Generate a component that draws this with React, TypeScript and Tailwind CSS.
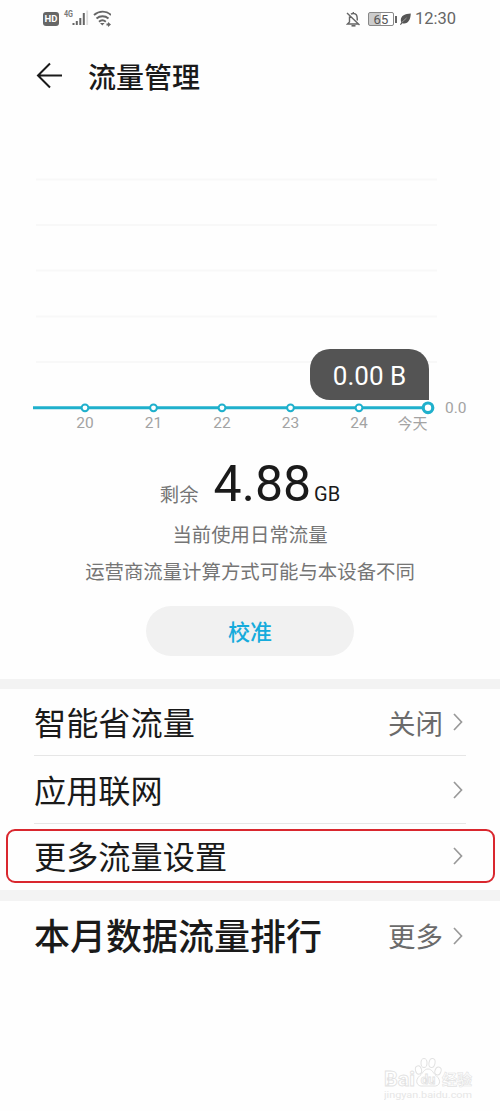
const GRID_LINES = [179.5, 225, 270.5, 316.5, 362];

const DAYS = [
  { label: "20", x: 85 },
  { label: "21", x: 153.5 },
  { label: "22", x: 222 },
  { label: "23", x: 290.5 },
  { label: "24", x: 359 },
];

function StatusBar() {
  return (
    <div className="flex h-[38px] items-center justify-between pr-11 pl-[43px] text-[#666]">
      <div className="flex items-center">
        <span className="flex h-[14px] w-4 items-center justify-center rounded-[3px] bg-[#666] text-[9.5px] font-bold text-white">
          HD
        </span>
        <svg className="ml-1 h-5 w-12" viewBox="0 0 48 20" fill="none">
          <text x="1" y="8" fontSize="9" fontWeight="700" fill="#777" textLength="9" lengthAdjust="spacingAndGlyphs">
            4G
          </text>
          <path d="M10.500 16v-2M13.800 16v-4M17.300 16V9M20.800 16V4" stroke="#666" strokeWidth="2" />
          <path d="M24.200 16V1.500" stroke="#ddd" strokeWidth="1.800" />
          <path
            d="M31 6c5-4.500 12.500-4.500 17 0M33.500 9.500c3.500-3 8.500-3 12 0M36 12.800c2-1.800 4.800-1.800 6.800 0"
            stroke="#666"
            strokeWidth="1.900"
          />
          <path d="M37 14l2.300 2.500 2.300-2.500zM43.500 14.500h1.500v-1.500l3 2.500-3 2.500v-1.500h-1.500z" fill="#666" />
        </svg>
      </div>

      <div className="flex items-center">
        {/* Muted bell */}
        <svg className="h-4 w-[15px]" viewBox="0 0 15 16" fill="none" stroke="#666" strokeWidth="1.400">
          <path d="M3.500 5.500V11L1.500 13h11M5 3.200C6 2.200 9 2.200 10.300 3.800c1 1.200 1 3 1 5.700M7.300 1v1.500M1 2l12.500 12" />
          <path d="M5.500 14.800h4" strokeWidth="1.600" />
        </svg>
        {/* Battery */}
        <span className="ml-[7px] flex h-[14px] w-[26px] items-center justify-center rounded-[2px] border border-[#888] bg-linear-to-r from-[#ccc] from-50% to-white to-50% pt-px text-[13px] leading-none text-[#555]">
          65
        </span>
        <span className="ml-px h-[7px] w-[2px] bg-[#666]" />
        <svg className="ml-[3px] h-3 w-[11px]" viewBox="0 0 11 12">
          <path d="M10.800.500C5 1 1 2.500.800 7c0 1 .2 1.700.6 2.200L0 11.500l.8.500 1.500-1.800C8 11.500 10.500 7 10.800.500z" fill="#555" />
          <path d="M2 9.200L6.500 5" stroke="#ddd" strokeWidth=".5" />
        </svg>
        <span className="ml-[4px] text-[16.500px]">12:30</span>
      </div>
    </div>
  );
}

function Header() {
  return (
    <header className="flex h-[76px] items-center pl-9 text-[#1a1a1a]">
      <svg className="h-7 w-[27px]" viewBox="0 0 27 28" fill="none" stroke="currentColor" strokeWidth="2">
        <path d="M26 13.500H2M14 1.500l-12 12 12 12" />
      </svg>
      <h1 className="ml-[25px] pt-[5px] text-[28px] leading-none font-medium">流量管理</h1>
    </header>
  );
}

function UsageChart() {
  return (
    <div className="relative h-[326px]">
      <svg className="block h-full w-full" viewBox="0 114 500 326">
        {GRID_LINES.map((y) => (
          <path key={y} d={`M36 ${y}H437`} stroke="#f8f8f8" strokeWidth="2" />
        ))}
        <path d="M33 407.800H428" stroke="#1fb0cc" strokeWidth="3" />
        {DAYS.map((day) => (
          <g key={day.label}>
            <circle cx={day.x} cy="407.800" r="3.400" fill="#fff" stroke="#1fb0cc" strokeWidth="2" />
            <text x={day.x} y="428" fontSize="15.500" textAnchor="middle" fill="#a3a3a3">
              {day.label}
            </text>
          </g>
        ))}
        <circle cx="428" cy="407.800" r="4.800" fill="#fff" stroke="#1fb0cc" strokeWidth="3.200" />
        <text x="397.500" y="428.500" fontSize="15" fill="#a3a3a3">
          今天
        </text>
        <text x="445" y="412.500" fontSize="15.500" fill="#a3a3a3">
          0.0
        </text>
      </svg>
      {/* Value bubble over today's point */}
      <div className="absolute top-[235px] left-[310px] flex h-[51px] w-[119px] items-center justify-center rounded-[20px] rounded-br-none bg-[#545454] pt-[3px] text-[26px] text-white">
        0.00 B
      </div>
    </div>
  );
}

function Balance() {
  return (
    <section className="flex h-[239px] flex-col items-center text-[19.4px] text-[#757575]">
      <div className="mt-[14px] flex h-[60px] items-baseline leading-[60px]">
        <span className="relative top-px">剩余</span>
        <span className="ml-[15px] text-[50px] text-[#1a1a1a]">4.88</span>
        <span className="ml-[3px] text-[20px] text-[#1a1a1a]">GB</span>
      </div>
      <p className="mt-2 leading-7">当前使用日常流量</p>
      <p className="mt-[9px] leading-7">运营商流量计算方式可能与本设备不同</p>
      <button className="mt-[19px] h-[50px] w-[208px] rounded-full bg-[#f1f1f1] pt-[2px] text-[22px] font-medium text-[#16abdc]">
        校准
      </button>
    </section>
  );
}

function Chevron() {
  return (
    <svg className="ml-[10px] h-[18px] w-[10px]" viewBox="0 0 10 18" fill="none" stroke="#999" strokeWidth="1.700">
      <path d="M1 1l7.500 8L1 17" />
    </svg>
  );
}

type RowProps = {
  title: string;
  value?: string;
};

function Row({ title, value }: RowProps) {
  return (
    <div className="flex h-full items-center justify-between pr-[3px] leading-none">
      <span className="pt-[5px] text-[32.2px] text-[#1a1a1a]">{title}</span>
      <span className="flex items-center text-[27.5px] text-[#6b6b6b]">
        {value && <span className="pt-[5px]">{value}</span>}
        <Chevron />
      </span>
    </div>
  );
}

function Watermark() {
  return (
    <div className="ml-[384px] w-[90px] text-[#e2e2e2]">
      <svg className="block h-[44px] w-[90px]" viewBox="0 0 90 44" fill="none" stroke="currentColor">
        <text x="0" y="29" fontSize="20" fontWeight="700" fill="#fff" strokeWidth=".8" textLength="31" lengthAdjust="spacingAndGlyphs">
          Bai
        </text>
        <g fill="#fff" strokeWidth="1">
          <ellipse cx="34.500" cy="13" rx="3" ry="4.200" transform="rotate(-15 34.500 13)" />
          <ellipse cx="40" cy="6" rx="3" ry="4.500" />
          <ellipse cx="48" cy="6" rx="3" ry="4.500" transform="rotate(12 48 6)" />
          <ellipse cx="54" cy="14" rx="3" ry="4" transform="rotate(20 54 14)" />
          <path d="M44 12c-4 0-5 4-8 6.500-6 5-3 11.500 3 10.500h10c7 1 9-5.500 3-10.500-3-2.500-4-6.500-8-6.500z" />
        </g>
        <text x="44" y="27" fontSize="13" fontWeight="700" fill="#fff" strokeWidth=".8" textAnchor="middle">
          du
        </text>
        <text x="58" y="27.500" fontSize="15" fontWeight="700" fill="#fff" strokeWidth=".6">
          经验
        </text>
        <text x="0" y="41" fontSize="9.500" fill="#e6e6e6" stroke="none" textLength="88" lengthAdjust="spacingAndGlyphs">
          jingyan.baidu.com
        </text>
      </svg>
    </div>
  );
}

export default function App() {
  return (
    <div className="flex h-[1111px] w-[500px] flex-col overflow-hidden bg-[#fefefe] font-[Roboto,'Noto_Sans_CJK_SC',sans-serif]">
      <StatusBar />
      <Header />
      <UsageChart />
      <Balance />

      <section className="border-t-[10px] border-[#f3f3f3]">
        <div className="mx-[34px] h-[67px] border-b border-[#e6e6e6]">
          <Row title="智能省流量" value="关闭" />
        </div>
        <div className="mx-[34px] h-[68px] border-b border-[#e6e6e6]">
          <Row title="应用联网" />
        </div>
        {/* Highlighted entry */}
        <div className="mt-[5px] mr-[5px] ml-[6px] h-[54px] rounded-[9px] border-2 border-[#d9272e] pr-[27px] pl-[26px]">
          <Row title="更多流量设置" />
        </div>
      </section>

      <section className="mt-[7px] border-t-[11px] border-[#f3f3f3]">
        <div className="mx-[34px] flex h-[69px] items-center justify-between pr-[3px] leading-none">
          <h2 className="pt-[5px] text-[36px] font-medium text-[#1a1a1a]">本月数据流量排行</h2>
          <span className="flex items-center text-[27.5px] text-[#6b6b6b]">
            <span className="pt-[4px]">更多</span>
            <Chevron />
          </span>
        </div>
      </section>

      <div className="mt-auto pb-[10px]">
        <Watermark />
      </div>
    </div>
  );
}
